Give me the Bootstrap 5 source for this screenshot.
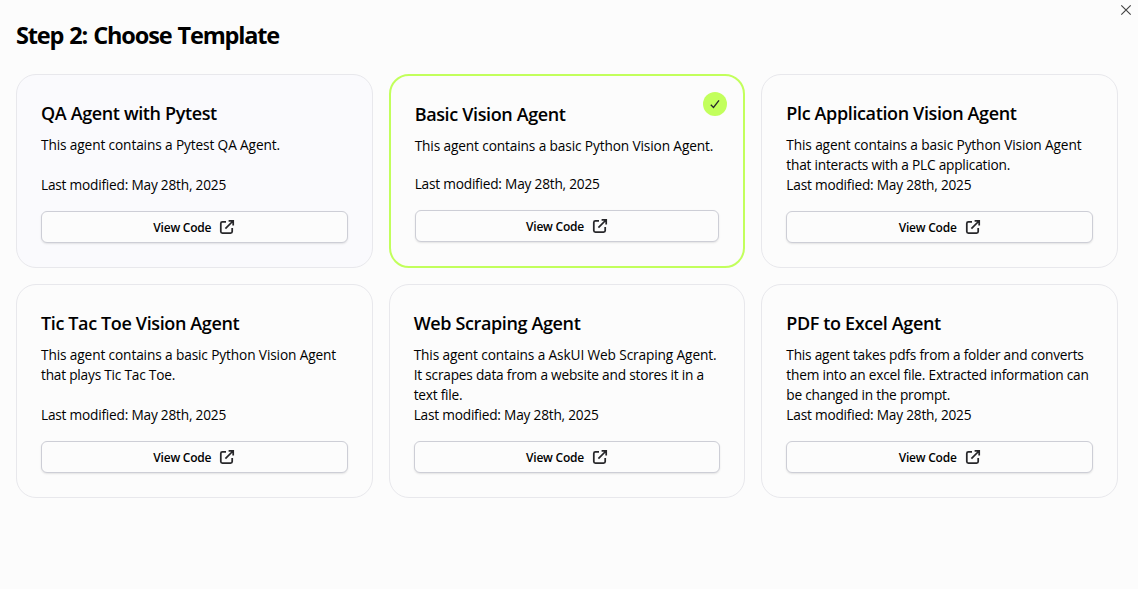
<!DOCTYPE html>
<html lang="en">
<head>
<meta charset="utf-8">
<meta name="viewport" content="width=device-width, initial-scale=1">
<title>Choose Template</title>
<link href="https://cdn.jsdelivr.net/npm/bootstrap@5.3.0/dist/css/bootstrap.min.css" rel="stylesheet">
<style>
body{background:#fcfcfc;color:#000;font-family:"Open Sans","Noto Sans",sans-serif;font-size:14px;line-height:20px}
main{padding-right:20px}
.page-title{font-size:23.5px;line-height:32px;font-weight:700;letter-spacing:-1.17px;word-spacing:1.2px;padding-top:19px;margin-bottom:23px}
.templates{display:grid;grid-template-columns:repeat(3,minmax(0,1fr));gap:16px}
.template{border:1px solid #e8e8ec;border-radius:20px;padding:24px;background:#fcfcfc}
.template.hovered{background:#fafafd}
.template.selected{border:2px solid #c2ff5c}
.template h2{font-size:18px;line-height:28px;font-weight:600;letter-spacing:-.37px;margin-bottom:8px}
.template p{font-size:13.7px;letter-spacing:-.22px;white-space:nowrap}
.template .loose{letter-spacing:-.13px}
.btn-code{height:32px;border:1px solid #cdced6;border-radius:6px;background:#fcfcfc;box-shadow:0 1px 2px rgba(0,0,0,.1);font-size:12px;line-height:16px;font-weight:600;letter-spacing:-.22px;color:#000;padding:0;gap:8px}
.btn-code span{padding-top:2px}
.btn-code svg{width:16px;height:16px}
.picked{width:24px;height:24px;background:#c2ff5c;top:16px;right:16px}
.dismiss{top:4px;right:6px;width:12px;height:12px;line-height:0}
</style>
</head>
<body>
<main class="position-relative ps-3">
  <button class="dismiss position-absolute border-0 bg-transparent p-0" aria-label="Close"><svg width="12" height="12" viewBox="0 0 12 12" fill="none" stroke="#444" stroke-width="1.15"><path d="M1.3 1.3l9.4 9.4M10.7 1.3L1.3 10.7"/></svg></button>
  <h1 class="page-title">Step 2: Choose Template</h1>
  <svg class="d-none"><symbol id="open" viewBox="0 0 16 16"><path d="M7 2.8H3.4a1.6 1.6 0 0 0-1.6 1.6v8.2a1.6 1.6 0 0 0 1.6 1.6h8.2a1.6 1.6 0 0 0 1.6-1.6V9M9.6 1.8h4.6v4.6M14 2L6.4 9.6" fill="none" stroke="#27272a" stroke-width="1.75"/></symbol></svg>
  <section class="templates">
    <article class="template hovered d-flex flex-column">
      <h2>QA Agent with Pytest</h2>
      <p class="mb-0 flex-grow-1 loose">This agent contains a Pytest QA Agent.</p>
      <p class="mb-3">Last modified: May 28th, 2025</p>
      <button class="btn btn-code d-flex align-items-center justify-content-center w-100"><span>View Code</span><svg><use href="#open"/></svg></button>
    </article>
    <article class="template selected position-relative d-flex flex-column">
      <span class="picked position-absolute rounded-circle d-flex align-items-center justify-content-center"><svg width="12" height="12" viewBox="0 0 12 12" fill="none" stroke="#27272a" stroke-width="1.3"><path d="M1.8 6.7L4.5 9.5L10 2.4"/></svg></span>
      <h2>Basic Vision Agent</h2>
      <p class="mb-0 flex-grow-1 loose">This agent contains a basic Python Vision Agent.</p>
      <p class="mb-3">Last modified: May 28th, 2025</p>
      <button class="btn btn-code d-flex align-items-center justify-content-center w-100"><span>View Code</span><svg><use href="#open"/></svg></button>
    </article>
    <article class="template d-flex flex-column">
      <h2>Plc Application Vision Agent</h2>
      <p class="mb-0 flex-grow-1"><span class="loose">This agent contains a basic Python Vision Agent</span><br>that interacts with a PLC application.</p>
      <p class="mb-3">Last modified: May 28th, 2025</p>
      <button class="btn btn-code d-flex align-items-center justify-content-center w-100"><span>View Code</span><svg><use href="#open"/></svg></button>
    </article>
    <article class="template d-flex flex-column">
      <h2>Tic Tac Toe Vision Agent</h2>
      <p class="mb-0 flex-grow-1"><span class="loose">This agent contains a basic Python Vision Agent</span><br>that plays Tic Tac Toe.</p>
      <p class="mb-3">Last modified: May 28th, 2025</p>
      <button class="btn btn-code d-flex align-items-center justify-content-center w-100"><span>View Code</span><svg><use href="#open"/></svg></button>
    </article>
    <article class="template d-flex flex-column">
      <h2>Web Scraping Agent</h2>
      <p class="mb-0 flex-grow-1"><span class="loose">This agent contains a AskUI Web Scraping Agent.</span><br>It scrapes data from a website and stores it in a<br>text file.</p>
      <p class="mb-3">Last modified: May 28th, 2025</p>
      <button class="btn btn-code d-flex align-items-center justify-content-center w-100"><span>View Code</span><svg><use href="#open"/></svg></button>
    </article>
    <article class="template d-flex flex-column">
      <h2>PDF to Excel Agent</h2>
      <p class="mb-0 flex-grow-1">This agent takes pdfs from a folder and converts<br>them into an excel file. Extracted information can<br>be changed in the prompt.</p>
      <p class="mb-3">Last modified: May 28th, 2025</p>
      <button class="btn btn-code d-flex align-items-center justify-content-center w-100"><span>View Code</span><svg><use href="#open"/></svg></button>
    </article>
  </section>
</main>
<script src="https://cdn.jsdelivr.net/npm/bootstrap@5.3.0/dist/js/bootstrap.bundle.min.js"></script>
</body>
</html>
